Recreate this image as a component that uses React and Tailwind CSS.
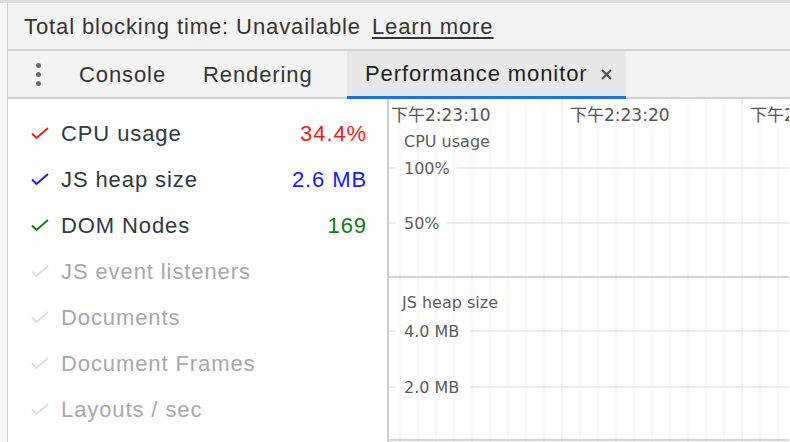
import React from "react";

const metrics = [
  { label: "CPU usage", value: "34.4%", color: "#f01c1c", on: true },
  { label: "JS heap size", value: "2.6 MB", color: "#1a1aff", on: true },
  { label: "DOM Nodes", value: "169", color: "#0f7c14", on: true },
  { label: "JS event listeners" },
  { label: "Documents" },
  { label: "Document Frames" },
  { label: "Layouts / sec" },
];

function Check({ color }) {
  return (
    <svg width="18" height="13" viewBox="0 0 18 13" className="shrink-0">
      <polyline
        points="1,6.5 5.5,11 17,1"
        fill="none"
        stroke={color}
        strokeWidth="2"
        strokeLinejoin="miter"
      />
    </svg>
  );
}

function MetricRow({ m }) {
  return (
    <div className="flex items-center h-[46px] pl-[23px] pr-[20px]">
      <Check color={m.on ? m.color : "#dedede"} />
      <span
        className={
          "ml-[12px] flex-1 " + (m.on ? "text-[#303942]" : "text-[#a8a8a8]")
        }
      >
        {m.label}
      </span>
      {m.value && <span style={{ color: m.color }}>{m.value}</span>}
    </div>
  );
}

function Chart() {
  // vertical grid: minor every 18px, major every 180px
  const minor = [];
  for (let x = 11; x < 400; x += 18) minor.push(x);
  const font = "'DejaVu Sans', 'Noto Sans CJK SC', sans-serif";

  function hLine(y, label, end) {
    return (
      <g key={label}>
        <line x1="0" y1={y} x2="7" y2={y} stroke="#e4e4e4" strokeWidth="1.5" />
        <line x1={end} y1={y} x2="400" y2={y} stroke="#e4e4e4" strokeWidth="1.5" />
        <text x="15" y={y + 6} fill="#5c5c5c" fontSize="16">
          {label}
        </text>
      </g>
    );
  }

  return (
    <svg width="400" height="343" viewBox="0 0 400 343" fontFamily={font}>
      {minor.map((x) => (
        <line
          key={x}
          x1={x}
          y1="0"
          x2={x}
          y2="343"
          stroke={(x - 173) % 180 === 0 ? "#e2e2e2" : "#f3f3f3"}
          strokeWidth="1"
        />
      ))}
      <text x="2" y="22" fill="#555" fontSize="17">下午2:23:10</text>
      <text x="181" y="22" fill="#555" fontSize="17">下午2:23:20</text>
      <text x="361" y="22" fill="#555" fontSize="17">下午2</text>

      <text x="15" y="48" fill="#5c5c5c" fontSize="16">CPU usage</text>
      {hLine(69, "100%", 68)}
      {hLine(124, "50%", 57)}
      <line x1="0" y1="178" x2="400" y2="178" stroke="#d4d4d4" strokeWidth="2" />

      <text x="13" y="209" fill="#5c5c5c" fontSize="16">JS heap size</text>
      {hLine(232, "4.0 MB", 81)}
      {hLine(288, "2.0 MB", 81)}
      <line x1="0" y1="341" x2="400" y2="341" stroke="#d4d4d4" strokeWidth="2" />
    </svg>
  );
}

export default function App() {
  return (
    <div
      className="w-[790px] h-[442px] overflow-hidden bg-[#dcdcdc] pt-[3px] text-[22px] tracking-[0.9px]"
      style={{ fontFamily: "'Liberation Sans', Arial, sans-serif" }}
    >
      <div className="flex h-[439px]">
        <div className="w-[8px] bg-[#f7f7f7] border-r border-[#d0d0d0] shrink-0" />
        <div className="flex-1 flex flex-col min-w-0">
          {/* info bar */}
          <div className="h-[48px] shrink-0 bg-[#f3f3f3] border-b-2 border-[#d2d2d2] flex items-center pl-[16px] text-[#333]">
            <span>Total blocking time: Unavailable</span>
            <span className="ml-[11px] underline underline-offset-[3px]">Learn more</span>
          </div>

          {/* tab bar */}
          <div className="h-[48px] shrink-0 bg-[#f3f3f3] border-b-2 border-[#d2d2d2] flex items-stretch">
            <div className="w-[52px] flex flex-col items-center justify-center gap-[4px] pl-[8px]">
              <span className="w-[5px] h-[5px] rounded-full bg-[#6b6b6b]" />
              <span className="w-[5px] h-[5px] rounded-full bg-[#6b6b6b]" />
              <span className="w-[5px] h-[5px] rounded-full bg-[#6b6b6b]" />
            </div>
            <div className="w-[124px] flex items-center pl-[19px] text-[#333]">Console</div>
            <div className="w-[163px] flex items-center pl-[19px] text-[#333]">Rendering</div>
            <div className="w-[279px] flex items-center pl-[18px] bg-[#e8e8e8] text-[#1f1f1f] border-b-[3px] border-[#1a73e8] mb-[-2px]">
              <span>Performance monitor</span>
              <svg width="11" height="11" viewBox="0 0 11 11" className="ml-[13px] mt-[1px]">
                <path d="M1 1 L10 10 M10 1 L1 10" stroke="#555" strokeWidth="2.2" />
              </svg>
            </div>
          </div>

          {/* content */}
          <div className="flex flex-1 bg-white min-h-0">
            <div className="w-[381px] shrink-0 pt-[11px] border-r-2 border-[#cfcfcf]">
              {metrics.map((m) => (
                <MetricRow key={m.label} m={m} />
              ))}
            </div>
            <div className="flex-1 overflow-hidden tracking-normal">
              <Chart />
            </div>
          </div>
        </div>
      </div>
    </div>
  );
}
